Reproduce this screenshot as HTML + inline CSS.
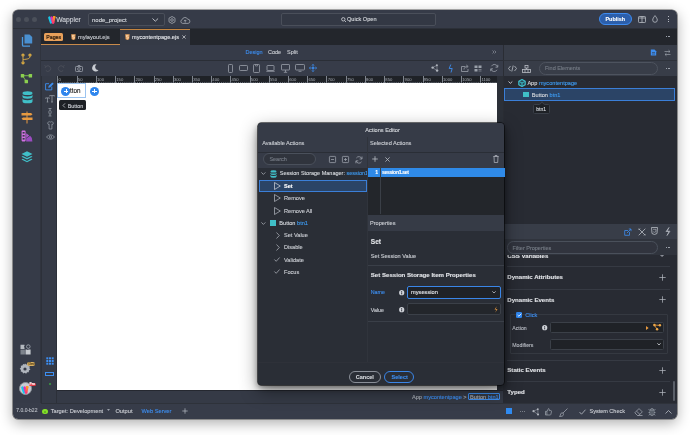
<!DOCTYPE html>
<html><head><meta charset="utf-8">
<style>
*{margin:0;padding:0;box-sizing:border-box}
html,body{width:690px;height:435px;overflow:hidden;background:#fff}
body{font-family:"Liberation Sans",sans-serif;position:relative;color:#c9ccd2}
.a{position:absolute}
.t{position:absolute;white-space:nowrap;line-height:8px;font-size:5.5px;-webkit-text-stroke:.12px currentColor}
.b{font-weight:bold}
svg{position:absolute;overflow:visible}
#win{position:absolute;left:13px;top:9.5px;width:664.3px;height:409px;border-radius:5px;overflow:hidden;box-shadow:0 4px 14px rgba(0,0,0,.33),0 0 0 .6px rgba(0,0,0,.6)}
#pg{position:absolute;left:-13px;top:-9.5px;width:690px;height:435px;will-change:transform}
.ic{stroke:#9aa0aa;fill:none;stroke-width:.8}
</style></head><body>
<div id="win"><div id="pg">
<!-- ===== base panels ===== -->
<div class="a" style="left:13px;top:9px;width:665px;height:410px;background:#363b48"></div>
<!-- title bar -->
<div class="a" style="left:13px;top:9px;width:665px;height:20px;background:#363b48;border-bottom:1px solid #2c3038"></div>
<!-- left sidebar -->
<div class="a" style="left:13px;top:29px;width:28px;height:374px;background:#363b48;border-right:1px solid #30343e"></div>
<!-- tabs bar -->
<div class="a" style="left:41px;top:29px;width:636px;height:16px;background:#23262c"></div>
<!-- design bar -->
<div class="a" style="left:41px;top:45px;width:462px;height:16px;background:#363b48;border-bottom:1px solid #2a2e36"></div>
<!-- toolbar -->
<div class="a" style="left:41px;top:61px;width:462px;height:15px;background:#373c49"></div>
<!-- left icon col -->
<div class="a" style="left:41px;top:76px;width:16px;height:327px;background:#353a46;border-left:1px solid #2c3039;border-right:1px solid #2c3039"></div>
<!-- canvas area bg -->
<div class="a" style="left:57px;top:76px;width:446px;height:327px;background:#2c3038"></div>
<!-- ruler -->
<div class="a" style="left:57px;top:76px;width:440px;height:7px;background:#1f2227"></div>
<!-- canvas -->
<div class="a" style="left:57px;top:83px;width:440px;height:307px;background:#fff"></div>
<!-- breadcrumb bar -->
<div class="a" style="left:57px;top:390px;width:446px;height:13px;background:#353a46;border-top:1.5px solid #252830"></div>
<!-- status bar -->
<div class="a" style="left:13px;top:402.5px;width:665px;height:17px;background:#373c49"></div><div class="a" style="left:41px;top:402.5px;width:637px;height:.8px;background:#2e323a"></div>
<!-- right panel -->
<div class="a" style="left:503px;top:45px;width:174px;height:16px;background:#383d48;border-left:1px solid #2a2d34;border-bottom:1px solid #2e323a"></div>
<div class="a" style="left:503px;top:61px;width:174px;height:15px;background:#383d48;border-left:1px solid #2a2d34"></div>
<div class="a" style="left:503px;top:76px;width:174px;height:148px;background:#282b33;border-left:1px solid #2a2d34"></div>
<div class="a" style="left:503px;top:224px;width:174px;height:15px;background:#383d48"></div>
<div class="a" style="left:503px;top:239px;width:174px;height:164px;background:#282b33"></div>
<!-- ===== title bar content ===== -->
<div class="a" style="left:16.4px;top:16.6px;width:5px;height:5px;border-radius:50%;background:#4b505a"></div>
<div class="a" style="left:24.1px;top:16.6px;width:5px;height:5px;border-radius:50%;background:#4b505a"></div>
<div class="a" style="left:31.7px;top:16.6px;width:5px;height:5px;border-radius:50%;background:#4b505a"></div>
<!-- wappler logo -->
<svg style="left:47.5px;top:15.5px" width="9" height="8" viewBox="0 0 9 8"><defs><linearGradient id="lg2" x1="0" y1="0" x2="0" y2="1"><stop offset="0" stop-color="#ff9a20"/><stop offset="1" stop-color="#ff3a6a"/></linearGradient></defs>
 <path d="M1.4 1.6 L3 6.4" stroke="#18c8e8" stroke-width="2.5" stroke-linecap="round"/>
 <path d="M3.6 1.6 L5 6.4" stroke="#e02cb8" stroke-width="2.5" stroke-linecap="round"/>
 <path d="M6.4 1.3 L6.2 1.3 L5.2 6.4" stroke="url(#lg2)" stroke-width="2.5" stroke-linecap="round"/>
</svg>
<div class="t" style="left:56.2px;top:15.3px;font-size:6.7px;line-height:9px;color:#cfd2d8">Wappler</div>
<!-- project dropdown -->
<div class="a" style="left:88px;top:13px;width:76.5px;height:12.5px;border:.8px solid #4a4f5a;border-radius:2px;background:#333844"></div>
<div class="t" style="left:92px;top:15.5px;font-size:6px;color:#d5d8dd">node_project</div>
<svg style="left:152px;top:17.5px" width="7" height="4"><path fill="none" d="M.5 .5 L3.3 3.2 L6.1 .5" stroke="#c9ccd2" stroke-width=".9"/></svg>
<!-- gear -->
<svg style="left:167.5px;top:16px" width="8" height="8" viewBox="0 0 8 8"><path d="M4 .5 L7 2.2 V5.8 L4 7.5 L1 5.8 V2.2 Z" stroke="#a4a9b1" stroke-width=".8" fill="none" stroke-linejoin="round"/><circle cx="4" cy="4" r="1.3" stroke="#a4a9b1" stroke-width=".8" fill="none"/></svg>
<!-- cloud -->
<svg style="left:180.3px;top:16.5px" width="10.5" height="7" viewBox="0 0 10.5 7"><path d="M2.6 6.4 A2 2 0 0 1 2.3 2.5 A2.8 2.8 0 0 1 7.6 2.2 A2.1 2.1 0 0 1 8 6.4 Z" stroke="#a4a9b1" stroke-width=".8" fill="none"/><path d="M5.2 5.6 V3 M4 4.1 L5.2 2.9 L6.4 4.1" stroke="#a4a9b1" stroke-width=".8" fill="none"/></svg>
<!-- quick open -->
<div class="a" style="left:281px;top:13px;width:155px;height:12.5px;border:.8px solid #4a4f5a;border-radius:2px;background:#333844"></div>
<svg style="left:341px;top:16.5px" width="6" height="6"><circle fill="none" stroke-width=".8" cx="2.3" cy="2.3" r="1.7" stroke="#d5d8dd"/><path fill="none" stroke-width=".8" d="M3.6 3.6 L5 5" stroke="#d5d8dd"/></svg>
<div class="t" style="left:347px;top:15px;font-size:5.6px;color:#d5d8dd">Quick Open</div>
<!-- publish -->
<div class="a" style="left:599px;top:13px;width:33px;height:12px;border-radius:6px;background:#2c5fab;border:1px solid #3d8bf0"></div>
<div class="t b" style="left:605.5px;top:15px;font-size:5.4px;color:#fff">Publish</div>
<!-- split icon -->
<svg style="left:638px;top:15.5px" width="8" height="7"><rect fill="none" stroke-width=".8" x=".5" y=".5" width="7" height="6" rx=".8" stroke="#b8bcc4"/><path fill="none" stroke-width=".8" d="M4 .5 V6.5 M.5 2 H7.5" stroke="#b8bcc4"/></svg>
<!-- droplet -->
<svg style="left:652px;top:15px" width="6" height="8"><path fill="none" stroke-width=".8" d="M3 .6 C4.3 2.4 5.3 3.6 5.3 5 A2.3 2.3 0 0 1 .7 5 C.7 3.6 1.7 2.4 3 .6 Z" stroke="#b8bcc4"/></svg>
<!-- dots -->
<div class="a" style="left:667.8px;top:16px;width:1.2px;height:1.2px;background:#b8bcc4"></div>
<div class="a" style="left:667.8px;top:18.6px;width:1.2px;height:1.2px;background:#b8bcc4"></div>
<div class="a" style="left:667.8px;top:21.2px;width:1.2px;height:1.2px;background:#b8bcc4"></div>

<!-- ===== tabs bar ===== -->
<div class="a" style="left:41px;top:44px;width:79px;height:1px;background:#c88a4a"></div>
<div class="a" style="left:44px;top:33px;width:19px;height:7.5px;border-radius:1.5px;background:#e8a05a"></div>
<div class="t" style="left:46.3px;top:32.7px;font-size:5.2px;color:#24160a;-webkit-text-stroke:.2px #24160a">Pages</div>
<svg style="left:70.5px;top:33.8px" width="5" height="6.5"><path d="M.2 .2 H4.6 L4.2 5.2 L2.4 6.1 L.6 5.2 Z" fill="#e8a05a"/><path d="M3.4 1.4 H1.5 L1.6 3 H3.3 L3.2 4.3 L2.4 4.7 L1.6 4.3" stroke="#fff3e0" stroke-width=".55" fill="none"/></svg>
<div class="t" style="left:78px;top:33px;font-size:5.7px;color:#c9ccd2">mylayout.ejs</div>
<div class="a" style="left:120px;top:29px;width:69.6px;height:16px;background:#353a46;border-top:.9px solid #c4843f"></div>
<svg style="left:124.5px;top:33.8px" width="5" height="6.5"><path d="M.2 .2 H4.6 L4.2 5.2 L2.4 6.1 L.6 5.2 Z" fill="#e8a05a"/><path d="M3.4 1.4 H1.5 L1.6 3 H3.3 L3.2 4.3 L2.4 4.7 L1.6 4.3" stroke="#fff3e0" stroke-width=".55" fill="none"/></svg>
<div class="t" style="left:132px;top:33px;font-size:5.6px;color:#e2e4e8">mycontentpage.ejs</div>
<svg style="left:182.3px;top:35px" width="4" height="4"><path d="M.4 .4 L3.6 3.6 M3.6 .4 L.4 3.6" stroke="#c9ccd2" stroke-width=".75"/></svg>
<div class="a" style="left:666.40px;top:36.35px;width:.9px;height:.9px;background:#9aa0aa"></div><div class="a" style="left:667.70px;top:36.35px;width:.9px;height:.9px;background:#9aa0aa"></div><div class="a" style="left:669.00px;top:36.35px;width:.9px;height:.9px;background:#9aa0aa"></div>
<!-- ===== design bar ===== -->
<div class="t" style="left:245.5px;top:48px;font-size:5.5px;color:#3d8ef0">Design</div>
<div class="t" style="left:268px;top:48px;font-size:5.5px;color:#c9ccd2">Code</div>
<div class="t" style="left:287px;top:48px;font-size:5.5px;color:#c9ccd2">Split</div>
<svg style="left:492px;top:50px" width="5" height="5"><path fill="none" stroke="#9aa0aa" d="M.5 .5 L2 2 L.5 3.5 M2.5 .5 L4 2 L2.5 3.5" stroke-width=".6"/></svg>
<!-- right panel top icons -->
<svg style="left:650px;top:49px" width="7" height="7"><path d="M.8 .5 H4.5 L6.2 2.2 V6.5 H.8 Z" fill="#3d8ef0"/><path d="M2 3.5 H5 M2 5 H5" stroke="#383d48" stroke-width=".6"/></svg>
<svg style="left:663.5px;top:49.5px" width="7" height="6"><path fill="none" stroke="#9aa0aa" d="M.5 1.5 H6 M4.5 .2 L6 1.5 L4.5 2.8 M6.5 4.5 H1 M2.5 3.2 L1 4.5 L2.5 5.8" stroke-width=".7"/></svg>
<!-- ===== toolbar ===== -->
<svg style="left:44px;top:65px" width="8" height="7"><path fill="none" stroke-width=".8" d="M2 1.5 A2.8 2.8 0 1 1 1.8 5.5 M.5 .5 L2 1.5 L1 3" stroke="#4c515b"/></svg>
<svg style="left:57px;top:65px" width="8" height="7"><path fill="none" stroke-width=".8" d="M6 1.5 A2.8 2.8 0 1 0 6.2 5.5 M7.5 .5 L6 1.5 L7 3" stroke="#4c515b"/></svg>
<svg style="left:74.5px;top:64.5px" width="8" height="7"><rect fill="none" stroke-width=".8" stroke="#9aa0aa" x=".5" y="1.5" width="7" height="5" rx=".8"/><circle fill="none" stroke-width=".8" stroke="#9aa0aa" cx="4" cy="4" r="1.4"/><path fill="none" stroke-width=".8" stroke="#9aa0aa" d="M2.5 1.5 L3 .5 H5 L5.5 1.5"/></svg>
<svg style="left:91.5px;top:64px" width="7" height="8"><path d="M4.5 .5 A3.5 3.5 0 1 0 6.5 6 A3 3 0 0 1 4.5 .5 Z" fill="#c9ccd2"/></svg>
<!-- devices -->
<svg style="left:228px;top:63.5px" width="5" height="9"><rect fill="none" stroke-width=".8" stroke="#9aa0aa" x=".5" y=".5" width="4" height="8" rx=".8"/></svg>
<svg style="left:238.5px;top:65px" width="9" height="6"><rect fill="none" stroke-width=".8" stroke="#9aa0aa" x=".5" y=".5" width="8" height="5" rx=".8"/></svg>
<svg style="left:253px;top:63.5px" width="7" height="9"><rect fill="none" stroke-width=".8" stroke="#9aa0aa" x=".5" y=".5" width="6" height="8" rx=".8"/><path fill="none" stroke="#9aa0aa" d="M2.5 .5 V2 H4.5 V.5" stroke-width=".6"/></svg>
<svg style="left:265.5px;top:64.5px" width="9" height="7"><rect fill="none" stroke-width=".8" stroke="#9aa0aa" x="1" y=".5" width="7" height="5" rx=".6"/><path fill="none" stroke-width=".8" stroke="#9aa0aa" d="M.3 6.3 H8.7"/></svg>
<svg style="left:280.5px;top:63.5px" width="9" height="9"><rect fill="none" stroke-width=".8" stroke="#9aa0aa" x=".5" y=".5" width="8" height="5.5" rx=".6"/><path fill="none" stroke-width=".8" stroke="#9aa0aa" d="M4.5 6 V8 M2.8 8.3 H6.2"/></svg>
<svg style="left:294.5px;top:64px" width="10" height="8"><rect fill="none" stroke-width=".8" stroke="#9aa0aa" x=".5" y=".5" width="9" height="5.5" rx=".8"/><path fill="none" stroke-width=".8" stroke="#9aa0aa" d="M3.5 7.3 H6.5"/></svg>
<svg style="left:309px;top:64px" width="8" height="8"><path d="M4 .5 V7.5 M.5 4 H7.5" stroke="#3d8ef0" stroke-width=".7"/><path d="M3 1.5 L4 .4 L5 1.5 M3 6.5 L4 7.6 L5 6.5 M1.5 3 L.4 4 L1.5 5 M6.5 3 L7.6 4 L6.5 5" stroke="#3d8ef0" stroke-width=".8" fill="none"/><circle cx="4" cy="4" r="1" fill="#3d8ef0"/></svg>
<!-- right tools -->
<svg style="left:431px;top:64.3px" width="8" height="8"><path d="M1.6 3.6 L5.9 1.3 M1.6 3.6 L6.1 6.6 M5.9 1.3 L6.1 6.6" stroke="#9aa0aa" stroke-width=".6" fill="none"/><circle cx="1.6" cy="3.6" r="1.2" fill="#b0b5bd"/><circle cx="5.9" cy="1.3" r="1" fill="#b0b5bd"/><circle cx="6.1" cy="6.6" r="1.2" fill="#b0b5bd"/></svg>
<svg style="left:447.5px;top:63.5px" width="6" height="9"><path d="M2.8 .5 L1.2 4.5 H4.2 L3 8.5" stroke="#3d8ef0" stroke-width=".9" fill="none" stroke-linejoin="round"/></svg>
<svg style="left:460.5px;top:64px" width="9" height="8"><path fill="none" stroke-width=".8" stroke="#9aa0aa" d="M4 2.5 H.5 V7.5 H7 V5"/><path fill="none" stroke-width=".8" stroke="#9aa0aa" d="M3 5.5 C3 3.5 4.5 2.5 6.5 2.5 M5.3 1 L7.2 2.5 L5.3 4"/></svg>
<svg style="left:474px;top:64.5px" width="8" height="7"><rect x=".5" y=".5" width="3" height="2.5" fill="#9aa0aa"/><rect x="4.5" y=".5" width="3" height="2.5" fill="#9aa0aa"/><rect x=".5" y="4" width="3" height="2.5" fill="#9aa0aa"/><path fill="none" stroke="#9aa0aa" d="M4.5 4.5 H7.5 M4.5 6 H7.5" stroke-width=".6"/></svg>
<svg style="left:490px;top:64px" width="9" height="8"><path fill="none" stroke-width=".8" stroke="#9aa0aa" d="M7.5 3 A3.2 3.2 0 0 0 1.5 2.2 M1 5 A3.2 3.2 0 0 0 7 5.8"/><path fill="none" stroke-width=".8" stroke="#9aa0aa" d="M7.8 .8 V3.2 H5.5 M.7 7.2 V4.8 H3"/></svg>
<!-- right panel toolbar -->
<svg style="left:508px;top:65px" width="9" height="7"><path fill="none" stroke-width=".8" d="M2.5 1 L.5 3.5 L2.5 6 M6.5 1 L8.5 3.5 L6.5 6 M5.2 .5 L3.8 6.5" stroke="#b8bcc4"/></svg>
<svg style="left:522px;top:64.5px" width="9" height="8"><rect fill="none" stroke-width=".8" x="3" y=".5" width="3" height="2.5" stroke="#b8bcc4"/><rect fill="none" stroke-width=".8" x=".5" y="4.5" width="8" height="3" stroke="#b8bcc4"/><path fill="none" stroke-width=".8" d="M3 4.5 V7.5 M6 4.5 V7.5 M4.5 3 V4.5" stroke="#b8bcc4"/></svg>
<div class="a" style="left:538.5px;top:62px;width:119.5px;height:12.5px;border:.8px solid #4d535e;border-radius:6.5px"></div>
<div class="t" style="left:545px;top:64.3px;font-size:5.5px;color:#767c86">Find Elements</div>
<div class="a" style="left:666.40px;top:67.75px;width:.9px;height:.9px;background:#9aa0aa"></div><div class="a" style="left:667.70px;top:67.75px;width:.9px;height:.9px;background:#9aa0aa"></div><div class="a" style="left:669.00px;top:67.75px;width:.9px;height:.9px;background:#9aa0aa"></div>
<!-- ruler -->
<div class="a" style="left:57.40px;top:76.2px;width:.7px;height:6.5px;background:#80868f"></div>
<div class="t" style="left:58.60px;top:76.6px;font-size:4.2px;line-height:5.5px;color:#a8adb5;-webkit-text-stroke:0">0</div>
<div class="a" style="left:76.62px;top:76.2px;width:.7px;height:6.5px;background:#80868f"></div>
<div class="t" style="left:77.82px;top:76.6px;font-size:4.2px;line-height:5.5px;color:#a8adb5;-webkit-text-stroke:0">50</div>
<div class="a" style="left:95.84px;top:76.2px;width:.7px;height:6.5px;background:#80868f"></div>
<div class="t" style="left:97.04px;top:76.6px;font-size:4.2px;line-height:5.5px;color:#a8adb5;-webkit-text-stroke:0">100</div>
<div class="a" style="left:115.06px;top:76.2px;width:.7px;height:6.5px;background:#80868f"></div>
<div class="t" style="left:116.26px;top:76.6px;font-size:4.2px;line-height:5.5px;color:#a8adb5;-webkit-text-stroke:0">150</div>
<div class="a" style="left:134.28px;top:76.2px;width:.7px;height:6.5px;background:#80868f"></div>
<div class="t" style="left:135.48px;top:76.6px;font-size:4.2px;line-height:5.5px;color:#a8adb5;-webkit-text-stroke:0">200</div>
<div class="a" style="left:153.50px;top:76.2px;width:.7px;height:6.5px;background:#80868f"></div>
<div class="t" style="left:154.70px;top:76.6px;font-size:4.2px;line-height:5.5px;color:#a8adb5;-webkit-text-stroke:0">250</div>
<div class="a" style="left:172.72px;top:76.2px;width:.7px;height:6.5px;background:#80868f"></div>
<div class="t" style="left:173.92px;top:76.6px;font-size:4.2px;line-height:5.5px;color:#a8adb5;-webkit-text-stroke:0">300</div>
<div class="a" style="left:191.94px;top:76.2px;width:.7px;height:6.5px;background:#80868f"></div>
<div class="t" style="left:193.14px;top:76.6px;font-size:4.2px;line-height:5.5px;color:#a8adb5;-webkit-text-stroke:0">350</div>
<div class="a" style="left:211.16px;top:76.2px;width:.7px;height:6.5px;background:#80868f"></div>
<div class="t" style="left:212.36px;top:76.6px;font-size:4.2px;line-height:5.5px;color:#a8adb5;-webkit-text-stroke:0">400</div>
<div class="a" style="left:230.38px;top:76.2px;width:.7px;height:6.5px;background:#80868f"></div>
<div class="t" style="left:231.58px;top:76.6px;font-size:4.2px;line-height:5.5px;color:#a8adb5;-webkit-text-stroke:0">450</div>
<div class="a" style="left:249.60px;top:76.2px;width:.7px;height:6.5px;background:#80868f"></div>
<div class="t" style="left:250.80px;top:76.6px;font-size:4.2px;line-height:5.5px;color:#a8adb5;-webkit-text-stroke:0">500</div>
<div class="a" style="left:268.82px;top:76.2px;width:.7px;height:6.5px;background:#80868f"></div>
<div class="t" style="left:270.02px;top:76.6px;font-size:4.2px;line-height:5.5px;color:#a8adb5;-webkit-text-stroke:0">550</div>
<div class="a" style="left:288.04px;top:76.2px;width:.7px;height:6.5px;background:#80868f"></div>
<div class="t" style="left:289.24px;top:76.6px;font-size:4.2px;line-height:5.5px;color:#a8adb5;-webkit-text-stroke:0">600</div>
<div class="a" style="left:307.26px;top:76.2px;width:.7px;height:6.5px;background:#80868f"></div>
<div class="t" style="left:308.46px;top:76.6px;font-size:4.2px;line-height:5.5px;color:#a8adb5;-webkit-text-stroke:0">650</div>
<div class="a" style="left:326.48px;top:76.2px;width:.7px;height:6.5px;background:#80868f"></div>
<div class="t" style="left:327.68px;top:76.6px;font-size:4.2px;line-height:5.5px;color:#a8adb5;-webkit-text-stroke:0">700</div>
<div class="a" style="left:345.70px;top:76.2px;width:.7px;height:6.5px;background:#80868f"></div>
<div class="t" style="left:346.90px;top:76.6px;font-size:4.2px;line-height:5.5px;color:#a8adb5;-webkit-text-stroke:0">750</div>
<div class="a" style="left:364.92px;top:76.2px;width:.7px;height:6.5px;background:#80868f"></div>
<div class="t" style="left:366.12px;top:76.6px;font-size:4.2px;line-height:5.5px;color:#a8adb5;-webkit-text-stroke:0">800</div>
<div class="a" style="left:384.14px;top:76.2px;width:.7px;height:6.5px;background:#80868f"></div>
<div class="t" style="left:385.34px;top:76.6px;font-size:4.2px;line-height:5.5px;color:#a8adb5;-webkit-text-stroke:0">850</div>
<div class="a" style="left:403.36px;top:76.2px;width:.7px;height:6.5px;background:#80868f"></div>
<div class="t" style="left:404.56px;top:76.6px;font-size:4.2px;line-height:5.5px;color:#a8adb5;-webkit-text-stroke:0">900</div>
<div class="a" style="left:422.58px;top:76.2px;width:.7px;height:6.5px;background:#80868f"></div>
<div class="t" style="left:423.78px;top:76.6px;font-size:4.2px;line-height:5.5px;color:#a8adb5;-webkit-text-stroke:0">950</div>
<div class="a" style="left:441.80px;top:76.2px;width:.7px;height:6.5px;background:#80868f"></div>
<div class="t" style="left:443.00px;top:76.6px;font-size:4.2px;line-height:5.5px;color:#a8adb5;-webkit-text-stroke:0">1000</div>
<div class="a" style="left:461.02px;top:76.2px;width:.7px;height:6.5px;background:#80868f"></div>
<div class="t" style="left:462.22px;top:76.6px;font-size:4.2px;line-height:5.5px;color:#a8adb5;-webkit-text-stroke:0">1050</div>
<div class="a" style="left:480.24px;top:76.2px;width:.7px;height:6.5px;background:#80868f"></div>
<div class="t" style="left:481.44px;top:76.6px;font-size:4.2px;line-height:5.5px;color:#a8adb5;-webkit-text-stroke:0">1100</div>
<div class="a" style="left:57px;top:82px;width:440px;height:.8px;background-image:linear-gradient(90deg,#6a707a 50%,transparent 50%);background-size:1.92px 1px"></div>
<!-- ===== canvas content ===== -->
<div class="a" style="left:57px;top:83.4px;width:28.6px;height:14.8px;border:.7px solid #9cc4f0;background:#fff"></div>
<div class="t" style="left:62.2px;top:87.1px;font-size:6.3px;color:#111;-webkit-text-stroke:.1px #111">Button</div>
<div class="a" style="left:61.2px;top:86.5px;width:9.2px;height:9.2px;border-radius:50%;background:#2f86ee"></div>
<div class="a" style="left:63.5px;top:90.5px;width:4.5px;height:1px;background:#fff"></div>
<div class="a" style="left:65.5px;top:88.5px;width:1px;height:4.5px;background:#fff"></div>
<div class="a" style="left:89.7px;top:86.5px;width:9.2px;height:9.2px;border-radius:50%;background:#2f86ee"></div>
<div class="a" style="left:92px;top:90.5px;width:4.5px;height:1px;background:#fff"></div>
<div class="a" style="left:94px;top:88.5px;width:1px;height:4.5px;background:#fff"></div>
<div class="a" style="left:58.9px;top:100px;width:27.1px;height:10.3px;border-radius:1.5px;background:#1d2025"></div>
<svg style="left:61.8px;top:102.8px" width="4" height="5"><path d="M3 .4 L1 2.5 L3 4.6" stroke="#c9ccd2" stroke-width=".75" fill="none"/></svg>
<div class="t" style="left:67.7px;top:101.5px;font-size:5.4px;color:#c9ccd2">Button</div>

<!-- ===== left sidebar icons ===== -->
<!-- pages -->
<svg style="left:20.5px;top:33.5px" width="12" height="13" viewBox="0 0 12 13"><path d="M3.5 .5 H8.5 L11.2 3 V9.5 H3.5 Z" fill="#4a90d0"/><path d="M1.5 3 V11 A1.2 1.2 0 0 0 2.7 12.2 H9" stroke="#4a9ae0" stroke-width="1.3" fill="none"/></svg>
<!-- git -->
<svg style="left:20px;top:52px" width="13" height="13" viewBox="0 0 13 13"><path d="M3 4.2 V9.3 M10 4.2 C10 7 7.5 7 3.2 7.6" stroke="#e0b04a" stroke-width=".9" fill="none"/><circle cx="3" cy="3" r="1.6" fill="#e8b84a"/><circle cx="10" cy="3" r="1.6" fill="#e8b84a"/><circle cx="3" cy="10.8" r="1.6" fill="#e8b84a"/><circle cx="3" cy="3" r=".6" fill="#7a5a20"/><circle cx="10" cy="3" r=".6" fill="#7a5a20"/><circle cx="3" cy="10.8" r=".6" fill="#7a5a20"/></svg>
<!-- tree -->
<svg style="left:20px;top:72.5px" width="13" height="11" viewBox="0 0 13 11"><path d="M2.5 2.7 H10.4 M2.5 2.7 L6.3 8.5" stroke="#7cc44a" stroke-width=".9" fill="none"/><rect x=".8" y="1" width="3.4" height="3.4" rx=".5" fill="#8cd050"/><rect x="8.7" y="1" width="3.4" height="3.4" rx=".5" fill="#8cd050"/><rect x="4.6" y="6.8" width="3.4" height="3.4" rx=".5" fill="#8cd050"/></svg>
<!-- database -->
<svg style="left:21.5px;top:91px" width="11" height="13" viewBox="0 0 11 13"><ellipse cx="5.5" cy="2.2" rx="5" ry="1.9" fill="#40bfc8"/><path d="M.5 3.6 V5.8 A5 1.9 0 0 0 10.5 5.8 V3.6 A5 1.9 0 0 1 .5 3.6 Z" fill="#40bfc8"/><path d="M.5 7.3 V10.4 A5 1.9 0 0 0 10.5 10.4 V7.3 A5 1.9 0 0 1 .5 7.3 Z" fill="#40bfc8"/></svg>
<!-- signpost -->
<svg style="left:21px;top:110.5px" width="12" height="13" viewBox="0 0 12 13"><path d="M6 .5 V12.5" stroke="#e89a40" stroke-width="1"/><path d="M.5 2 H10 L11.5 3.3 L10 4.6 H.5 Z" fill="#e89a40"/><path d="M11.5 6.5 H2 L.5 7.8 L2 9.1 H11.5 Z" fill="#e89a40"/></svg>
<!-- palette -->
<svg style="left:21px;top:130px" width="12" height="12" viewBox="0 0 12 12"><rect x=".6" y=".6" width="4" height="10.8" rx=".8" fill="#d070e0"/><rect x="1.6" y="2" width="2" height="1.6" fill="#363b48"/><rect x="1.6" y="5" width="2" height="1.6" fill="#363b48"/><rect x="1.6" y="8" width="2" height="1.6" fill="#363b48"/><path d="M5.2 3.2 L8.2 5.4 L5.2 8 Z" fill="#b058d0"/><path d="M5.2 11.4 V8.4 L9.2 5.8 A6.5 6.5 0 0 1 11.4 11.4 Z" fill="#9a4cc0"/></svg>
<!-- layers -->
<svg style="left:21px;top:151px" width="12" height="12" viewBox="0 0 12 12"><path d="M6 .3 L11.5 3 L6 5.7 L.5 3 Z" fill="#40bfc8"/><path d="M1.8 5 L.5 5.8 L6 8.5 L11.5 5.8 L10.2 5 L6 7.1 Z" fill="#40bfc8"/><path d="M1.8 7.8 L.5 8.6 L6 11.3 L11.5 8.6 L10.2 7.8 L6 9.9 Z" fill="#40bfc8"/></svg>
<!-- puzzle -->
<svg style="left:19.5px;top:344px" width="11.5" height="11" viewBox="0 0 11.5 11"><path d="M.5 .8 H4.5 V2 A.9 .9 0 0 0 4.5 3.6 V5 H.5 Z" fill="#b4b9c0"/><rect x=".5" y="5.6" width="4.4" height="4.9" fill="#7d838c"/><path d="M5.5 5.6 H7 A.9 .9 0 0 0 8.6 5.6 H10.6 V10.5 H5.5 Z" fill="#c4c8ce"/><circle cx="8.3" cy="2.6" r="1.8" stroke="#9aa0aa" stroke-width=".9" fill="none"/></svg>
<!-- gear dev -->
<svg style="left:19px;top:363px" width="12" height="12" viewBox="0 0 12 12"><path d="M6 .4 L7.2 1.6 L8.9 1.3 L9.3 2.9 L10.9 3.6 L10.4 5.2 L11.4 6.6 L9.9 7.5 L9.8 9.2 L8.1 9.2 L7.1 10.7 L5.7 9.8 L4.1 10.6 L3.4 9 L1.7 8.6 L2 6.9 L.7 5.7 L2 4.5 L1.8 2.8 L3.4 2.5 L4.2 .9 L5.5 1.6 Z" fill="#b0b5bd"/><circle cx="6" cy="6" r="1.6" fill="#363b48"/></svg>
<div class="a" style="left:27.1px;top:362.3px;width:8.4px;height:4px;border-radius:2px;background:#d9b062"></div>
<div class="t" style="left:28.5px;top:360.8px;font-size:3.6px;line-height:6px;color:#4a3510">Dev</div>
<!-- wappler pro -->
<div class="a" style="left:18.6px;top:382px;width:13.4px;height:13.4px;border-radius:50%;background:#c9ccd2;border:1px solid #8e939b"></div>
<svg style="left:21px;top:385.5px" width="9" height="8" viewBox="0 0 9 8"><defs><linearGradient id="lg4" x1="0" y1="0" x2="0" y2="1"><stop offset="0" stop-color="#ff9a20"/><stop offset="1" stop-color="#ff3a6a"/></linearGradient></defs>
 <path d="M1.4 1.6 L3 6.4" stroke="#18c8e8" stroke-width="2.5" stroke-linecap="round"/>
 <path d="M3.6 1.6 L5 6.4" stroke="#e02cb8" stroke-width="2.5" stroke-linecap="round"/>
 <path d="M6.4 1.3 L6.2 1.3 L5.2 6.4" stroke="url(#lg4)" stroke-width="2.5" stroke-linecap="round"/>
</svg>
<div class="a" style="left:28.6px;top:382.7px;width:7px;height:3.8px;border-radius:1.9px;background:#e03c48"></div>
<div class="t b" style="left:29.6px;top:381.3px;font-size:3.2px;line-height:6px;color:#fff">Pro</div>

<!-- ===== left icon col ===== -->
<svg style="left:44.8px;top:81.5px" width="9" height="8.5" viewBox="0 0 9 8.5"><path d="M6.8 4.6 V7.9 H.6 V1.7 H4" stroke="#3d8ef0" stroke-width=".9" fill="none"/><path d="M3.2 5.8 L3.6 4 L7.3 .4 L8.7 1.8 L5 5.4 Z" fill="#3d8ef0"/></svg>
<svg style="left:44.5px;top:94.5px" width="10" height="7.5"><path d="M.6 2.9 H4.4 M.6 2.9 V3.6 M4.4 2.9 V3.6 M2.5 2.9 V7 M1.7 7 H3.3 M4.6 .6 H9.4 M4.6 .6 V1.4 M9.4 .6 V1.4 M7 .6 V7 M6 7 H8" stroke="#9aa0aa" stroke-width=".75" fill="none"/></svg>
<svg style="left:47.5px;top:107.5px" width="4" height="8.5"><path d="M.5 .5 H3.5 M2 .5 V2.5 M.5 8 H3.5 M2 6 V8" stroke="#9aa0aa" stroke-width=".7" fill="none"/><rect x=".9" y="2.6" width="2.2" height="3.3" rx=".8" stroke="#9aa0aa" stroke-width=".7" fill="none"/></svg>
<svg style="left:46.5px;top:120.5px" width="7" height="8.5"><path d="M2.3 .5 C2.7 1.3 4.3 1.3 4.7 .5 L6.5 1.8 L5.6 3.6 L4.9 3.2 V8 H2.1 V3.2 L1.4 3.6 L.5 1.8 Z" stroke="#9aa0aa" stroke-width=".7" fill="none" stroke-linejoin="round"/></svg>
<svg style="left:45.5px;top:133.8px" width="9" height="6"><path d="M.5 3 C2.5 .2 6.5 .2 8.5 3 C6.5 5.8 2.5 5.8 .5 3 Z" stroke="#9aa0aa" stroke-width=".7" fill="none"/><circle cx="4.5" cy="3" r="1.2" stroke="#9aa0aa" stroke-width=".7" fill="none"/></svg>
<!-- bottom icons -->
<svg style="left:45.5px;top:357px" width="8" height="8"><g fill="#3d8ef0"><rect x=".3" y=".3" width="2" height="2"/><rect x="3" y=".3" width="2" height="2"/><rect x="5.7" y=".3" width="2" height="2"/><rect x=".3" y="3" width="2" height="2"/><rect x="3" y="3" width="2" height="2"/><rect x="5.7" y="3" width="2" height="2"/><rect x=".3" y="5.7" width="2" height="2"/><rect x="3" y="5.7" width="2" height="2"/><rect x="5.7" y="5.7" width="2" height="2"/></g></svg>
<div class="a" style="left:45.3px;top:371.8px;width:8.6px;height:4.2px;border:.8px solid #3d8ef0"></div>
<div class="a" style="left:48.6px;top:383.2px;width:2.2px;height:2.2px;border-radius:50%;background:#3aa040"></div>


<!-- ===== breadcrumb ===== -->
<div class="t" style="left:412px;top:392.5px;font-size:5.6px;color:#a8adb5">App <span style="color:#3d8ef0">mycontentpage</span> &gt;</div>
<div class="a" style="left:468.3px;top:393px;width:31.5px;height:7.2px;border:.8px solid #3d8ef0;border-radius:1px"></div>
<div class="t" style="left:470px;top:392.5px;font-size:5.6px;color:#a8adb5">Button <span style="color:#3d8ef0">btn1</span></div>

<!-- ===== status bar ===== -->
<div class="t" style="left:16.3px;top:406.1px;font-size:5px;color:#b8bcc4">7.0.0-b22</div>
<div class="a" style="left:42px;top:408.9px;width:5.6px;height:5.6px;border-radius:50%;background:#84e028"></div>
<div class="a" style="left:43.7px;top:410.6px;width:2.2px;height:2.2px;border-radius:50%;background:#5aa820"></div>
<div class="t" style="left:50.7px;top:406.6px;font-size:5.7px;color:#c9ccd2">Target: Development</div>
<svg style="left:107px;top:409.1px" width="3" height="2"><path d="M0 0 H3 L1.5 2 Z" fill="#9aa0aa"/></svg>
<div class="t" style="left:115.4px;top:406.6px;font-size:5.7px;color:#c9ccd2">Output</div>
<div class="t" style="left:141.5px;top:406.6px;font-size:5.7px;color:#3d8ef0">Web Server</div>
<svg style="left:182px;top:408.1px" width="6" height="6"><path d="M3 .3 V5.7 M.3 3 H5.7" stroke="#b8bcc4" stroke-width=".7"/></svg>
<!-- right status -->
<div class="a" style="left:506.4px;top:408px;width:6.1px;height:6.2px;background:#2f8af0"></div>
<div class="a" style="left:520.3px;top:410.8px;width:1px;height:.8px;background:#7a8089"></div><div class="a" style="left:521.9px;top:410.8px;width:1px;height:.8px;background:#7a8089"></div><div class="a" style="left:523.5px;top:410.8px;width:1px;height:.8px;background:#7a8089"></div>
<svg style="left:532px;top:407.5px" width="8" height="8"><path d="M1.5 3.2 L5.8 1.2 M1.5 3.2 L6 6.5 M5.8 1.2 L6 6.5" stroke="#9aa0aa" stroke-width=".6" fill="none"/><circle cx="1.5" cy="3.2" r="1.1" fill="#b0b5bd"/><circle cx="5.8" cy="1.2" r=".9" fill="#b0b5bd"/><circle cx="6" cy="6.5" r="1.1" fill="#b0b5bd"/></svg>
<svg style="left:545px;top:407.6px" width="7" height="7.5"><path d="M.5 3.3 H1.9 V7 H.5 Z M1.9 3.5 L3.5 .6 C4.3 .6 4.5 1.4 4.2 2.6 H6 C6.5 2.6 6.7 3.1 6.5 3.6 L5.8 6.5 C5.7 6.8 5.4 7 5.1 7 H1.9" stroke="#9aa0aa" stroke-width=".75" fill="none" stroke-linejoin="round"/></svg>
<svg style="left:558.5px;top:407.6px" width="9" height="9"><path fill="none" stroke-width=".8" stroke="#9aa0aa" d="M8.5 .5 L4 5 M4 5 C2.5 4.5 1.2 5.5 1.5 7 L.5 8.5 C2.5 8.5 4.5 8 4.5 6.5 Z"/></svg>
<svg style="left:579px;top:408.6px" width="7" height="6"><path fill="none" stroke-width=".8" d="M.5 3 L2.5 5.2 L6.5 .7" stroke="#b8bcc4"/></svg>
<div class="t" style="left:589.5px;top:407.1px;font-size:5.5px;color:#c9ccd2">System Check</div>
<svg style="left:633.5px;top:408.1px" width="9" height="8"><path fill="none" stroke-width=".8" stroke="#9aa0aa" d="M3.5 7.5 L.8 4.8 L5 .6 L8.3 3.9 L4.7 7.5 Z M2.5 3.2 L6 6.5 M3.5 7.5 H8.5"/></svg>
<svg style="left:647.5px;top:407.1px" width="8" height="9"><path fill="none" stroke="#9aa0aa" d="M2 3 H6 V6.5 A2 2 0 0 1 2 6.5 Z M4 3 V8.5 M2.5 3 A1.5 1.5 0 0 1 5.5 3 M.5 2 L2 3.5 M7.5 2 L6 3.5 M.5 5.5 H2 M6 5.5 H7.5 M.7 8.3 L2.2 7 M7.3 8.3 L5.8 7" stroke-width=".7"/></svg>
<svg style="left:664.8px;top:409.6px" width="7" height="4"><path fill="none" stroke-width=".8" d="M.5 3.5 L3.5 .5 L6.5 3.5" stroke="#b8bcc4"/></svg>
<!-- ===== right panel tree ===== -->
<svg style="left:508.3px;top:81.3px" width="5" height="3"><path d="M.5 .5 L2.4 2.3 L4.3 .5" stroke="#d0d3d8" stroke-width=".9" fill="none"/></svg>
<svg style="left:517.5px;top:79px" width="8" height="8" viewBox="0 0 8 8"><path d="M4 .6 L7.2 2.3 V5.8 L4 7.5 L.8 5.8 V2.3 Z" fill="#2a4a55" stroke="#40c4d0" stroke-width="1.1" stroke-linejoin="round"/><path d="M1.2 2.5 L4 4 L6.8 2.5 M4 4 V7.2" stroke="#40c4d0" stroke-width=".9" fill="none"/></svg>
<div class="t" style="left:527.4px;top:79px;font-size:5.6px;color:#d5d8dd">App <span style="color:#3d9af0">mycontentpage</span></div>
<div class="a" style="left:504px;top:88px;width:170.5px;height:12.5px;background:#2b4466;border:.8px solid #3b7fd8"></div>
<div class="a" style="left:523px;top:91.8px;width:5.8px;height:5.6px;background:#40bfc8"></div>
<div class="t" style="left:531.8px;top:90.5px;font-size:5.6px;color:#d5d8dd">Button <span style="color:#3d9af0">btn1</span></div>
<!-- tooltip -->
<div class="a" style="left:533.4px;top:104.4px;width:16.6px;height:9.6px;background:#1e2126;border-radius:1.5px;border:.5px solid #3a3f48"></div>
<div class="a" style="left:539.7px;top:102.4px;width:4px;height:4px;background:#1e2126;transform:rotate(45deg);border-left:.5px solid #3a3f48;border-top:.5px solid #3a3f48"></div>
<div class="t" style="left:536.3px;top:105.3px;font-size:5px;color:#d5d8dd">btn1</div>

<!-- ===== properties panel ===== -->
<svg style="left:624px;top:227.5px" width="8" height="8"><path d="M5.5 4 V7.3 H.7 V2.5 H4" stroke="#3d8ef0" stroke-width=".8" fill="none"/><path d="M3 5 L6.8 1.2 M4.8 1 H7 V3.2" stroke="#3d8ef0" stroke-width=".8" fill="none"/></svg>
<svg style="left:637.5px;top:227.5px" width="8" height="8"><path fill="none" stroke-width=".8" d="M.7 .7 L7.3 7.3 M7.3 .7 L.7 7.3 M.5 2 L2 .5 M6 7.5 L7.5 6" stroke="#b8bcc4"/></svg>
<svg style="left:650.5px;top:227px" width="7" height="8"><path fill="none" stroke-width=".8" d="M.5 .5 H6.5 L6 6.5 L3.5 7.5 L1 6.5 Z" stroke="#b8bcc4"/><path fill="none" d="M2 2.3 H5 L4.8 4.8 L3.5 5.3 L2.2 4.8" stroke="#b8bcc4" stroke-width=".6"/></svg>
<svg style="left:664.5px;top:227px" width="6" height="9"><path fill="none" d="M4 .5 L1 4.5 H4 L2 8.5 L5 4.2 H2.2 Z" stroke="#b8bcc4" stroke-width=".7"/></svg>
<!-- scrolled content under filter -->
<div class="t b" style="left:507.3px;top:252.2px;font-size:6.1px;color:#e2e4e8">CSS Variables</div>
<div class="t" style="left:660px;top:251.5px;font-size:7px;color:#b8bcc4">+</div>
<div class="a" style="left:503px;top:239px;width:174px;height:16px;background:#30343d"></div>
<div class="a" style="left:506.5px;top:241px;width:151.3px;height:12.6px;border:.8px solid #4a505b;border-radius:6.3px;background:rgba(50,54,63,.6)"></div>
<div class="t" style="left:512.5px;top:243.5px;font-size:5.5px;color:#767c86">Filter Properties</div>
<div class="a" style="left:666.40px;top:246.85px;width:.9px;height:.9px;background:#9aa0aa"></div><div class="a" style="left:667.70px;top:246.85px;width:.9px;height:.9px;background:#9aa0aa"></div><div class="a" style="left:669.00px;top:246.85px;width:.9px;height:.9px;background:#9aa0aa"></div>
<div class="a" style="left:506.5px;top:266px;width:163px;height:.7px;background:#363a43"></div>
<div class="t b" style="left:507.3px;top:273.4px;font-size:6.1px;color:#e2e4e8">Dynamic Attributes</div>
<svg style="left:659px;top:274px" width="7" height="7"><path d="M3.5 .3 V6.7 M.3 3.5 H6.7" stroke="#b8bcc4" stroke-width=".7"/></svg>
<div class="a" style="left:506.5px;top:288.5px;width:163px;height:.7px;background:#363a43"></div>
<div class="t b" style="left:507.3px;top:295.5px;font-size:6.1px;color:#e2e4e8">Dynamic Events</div>
<svg style="left:659px;top:296px" width="7" height="7"><path d="M3.5 .3 V6.7 M.3 3.5 H6.7" stroke="#b8bcc4" stroke-width=".7"/></svg>
<!-- click group -->
<div class="a" style="left:510px;top:314px;width:158px;height:40px;border:.7px solid #353941;border-radius:1px"></div>
<div class="a" style="left:515.6px;top:311.7px;width:6.3px;height:6.2px;border-radius:1.2px;background:#2f86ee"></div>
<svg style="left:516.6px;top:312.8px" width="5" height="4"><path d="M.6 2 L1.9 3.2 L4.3 .7" stroke="#fff" stroke-width=".85" fill="none"/></svg>
<div class="t" style="left:525.3px;top:310.5px;font-size:5.6px;color:#3d8ef0">Click</div>
<div class="t" style="left:512.3px;top:323.5px;font-size:5.2px;color:#b8bcc4">Action</div>
<svg style="left:541.70px;top:324.80px" width="5.4" height="5.4"><circle cx="2.7" cy="2.7" r="2.6" fill="#d0d3d9"/><rect x="2.25" y="2.35" width=".9" height="2" fill="#282b33"/><circle cx="2.7" cy="1.45" r=".5" fill="#282b33"/></svg>
<div class="a" style="left:549.6px;top:321.7px;width:114px;height:11.8px;border:.7px solid #3b4048;border-radius:1.5px;background:#1f2227"></div>
<svg style="left:645.8px;top:325.5px" width="3" height="4"><path d="M0 0 L2.6 2 L0 4 Z" fill="#e89a40"/></svg>
<svg style="left:652px;top:323px" width="10" height="8"><path d="M2.4 2.1 L7.9 2.3 M2.4 2.1 L5.1 6.3" stroke="#f0a040" stroke-width=".8" fill="none"/><circle cx="2.4" cy="2.1" r="1.3" fill="#f0a848"/><circle cx="7.9" cy="2.3" r="1.2" fill="#f0a848"/><circle cx="5.1" cy="6.3" r="1.2" fill="#f0a848"/></svg>
<div class="t" style="left:512.3px;top:340.5px;font-size:5.2px;color:#b8bcc4">Modifiers</div>
<div class="a" style="left:549.6px;top:338.7px;width:114px;height:11.7px;border:.7px solid #3b4048;border-radius:1.5px;background:#1f2227"></div>
<svg style="left:657.3px;top:342.8px" width="4" height="3"><path d="M.4 .4 L2 1.9 L3.6 .4" stroke="#e0e3e8" stroke-width=".8" fill="none"/></svg>
<div class="a" style="left:506.5px;top:359.7px;width:163px;height:.7px;background:#363a43"></div>
<div class="t b" style="left:507.3px;top:366px;font-size:6.1px;color:#e2e4e8">Static Events</div>
<svg style="left:659px;top:367px" width="7" height="7"><path d="M3.5 .3 V6.7 M.3 3.5 H6.7" stroke="#b8bcc4" stroke-width=".7"/></svg>
<div class="a" style="left:506.5px;top:380.8px;width:163px;height:.7px;background:#363a43"></div>
<div class="t b" style="left:507.3px;top:387.7px;font-size:6.1px;color:#e2e4e8">Typed</div>
<svg style="left:659px;top:388.5px" width="7" height="7"><path d="M3.5 .3 V6.7 M.3 3.5 H6.7" stroke="#b8bcc4" stroke-width=".7"/></svg>
<div class="a" style="left:672.5px;top:381.3px;width:2px;height:19.6px;border-radius:1px;background:#5a5f68"></div>
<!-- ===== modal ===== -->
<div class="a" style="left:258px;top:123px;width:246.2px;height:262px;border-radius:3.5px;background:#2a2e36;box-shadow:0 6px 18px rgba(0,0,0,.45),2px 3px 5px rgba(0,0,0,.2),-2px 3px 5px rgba(0,0,0,.2),0 0 0 .8px rgba(8,10,13,.75);overflow:hidden">
 <div class="a" style="left:0;top:0;width:247px;height:44.5px;background:#363b47"></div>
 <div class="a" style="left:0;top:28.5px;width:109px;height:.8px;background:#2a2e36"></div>
 <div class="a" style="left:109.2px;top:28.5px;width:137.8px;height:.8px;background:#2a2e36"></div>
 <div class="a" style="left:109.2px;top:14px;width:.8px;height:225.5px;background:#30343c"></div>
 <div class="a" style="left:110px;top:44.5px;width:137px;height:47.5px;background:#23262b"></div>
 <div class="a" style="left:110px;top:92px;width:137px;height:15.5px;background:#363b46"></div>
 <div class="a" style="left:110px;top:141.5px;width:137px;height:.7px;background:#3a3f48"></div>
 <div class="a" style="left:110px;top:197.5px;width:137px;height:.7px;background:#3a3f48"></div>
 <div class="a" style="left:0;top:239px;width:247px;height:.5px;background:#2e3139"></div>
</div>
<div class="t" style="left:365.3px;top:126px;font-size:5.6px;color:#d5d8dd">Actions Editor</div>
<div class="t" style="left:262.2px;top:139.3px;font-size:5.6px;color:#c9ccd2">Available Actions</div>
<div class="t" style="left:370px;top:139.3px;font-size:5.6px;color:#c9ccd2">Selected Actions</div>
<!-- search -->
<div class="a" style="left:263.2px;top:153.2px;width:53.3px;height:12.3px;border:.8px solid #4a505b;border-radius:6.2px;background:#30343d"></div>
<div class="t" style="left:269.4px;top:155.4px;font-size:5.5px;color:#767c86">Search</div>
<svg style="left:328.5px;top:156px" width="7" height="7"><rect fill="none" stroke-width=".8" stroke="#9aa0aa" x=".4" y=".4" width="6.2" height="6.2" rx=".8"/><path fill="none" stroke-width=".8" stroke="#9aa0aa" d="M2 3.5 H5"/></svg>
<svg style="left:341.7px;top:156px" width="7" height="7"><rect fill="none" stroke-width=".8" stroke="#9aa0aa" x=".4" y=".4" width="6.2" height="6.2" rx=".8"/><path fill="none" stroke-width=".8" stroke="#9aa0aa" d="M2 3.5 H5 M3.5 2 V5"/></svg>
<svg style="left:354.5px;top:155.5px" width="8" height="8"><path fill="none" stroke-width=".8" stroke="#9aa0aa" d="M6.8 2.8 A3 3 0 0 0 1.4 2 M1.1 5 A3 3 0 0 0 6.5 5.8"/><path fill="none" stroke-width=".8" stroke="#9aa0aa" d="M7 .5 V3 H4.6 M.9 7.3 V4.8 H3.3"/></svg>
<!-- right header tools -->
<svg style="left:371.8px;top:156.3px" width="6" height="6"><path fill="none" stroke-width=".8" d="M3 .2 V5.8 M.2 3 H5.8" stroke="#b8bcc4"/></svg>
<svg style="left:385.3px;top:157px" width="5" height="5"><path fill="none" stroke-width=".8" d="M.4 .4 L4.6 4.6 M4.6 .4 L.4 4.6" stroke="#b8bcc4"/></svg>
<svg style="left:492.8px;top:155.3px" width="6" height="8"><path fill="none" d="M.3 1.5 H5.7 M2 1.5 V.5 H4 V1.5 M1 1.5 L1.3 7.5 H4.7 L5 1.5" stroke="#b8bcc4" stroke-width=".7"/></svg>
<!-- selected action row -->
<div class="a" style="left:367.8px;top:167.5px;width:137px;height:9.4px;background:#2f8ae8"></div>
<div class="a" style="left:380.3px;top:167.4px;width:.6px;height:47px;background:#3a3f47"></div>
<div class="t b" style="left:375.3px;top:168.3px;font-size:5.2px;color:#fff">1</div>
<div class="t b" style="left:382px;top:168.3px;font-size:5.1px;color:#fff;letter-spacing:-.33px">session1.set</div>
<!-- tree -->
<svg style="left:260.5px;top:172px" width="5" height="3"><path d="M.4 .4 L2.4 2.4 L4.4 .4" stroke="#b8bcc4" stroke-width=".7" fill="none"/></svg>
<svg style="left:269.7px;top:169.5px" width="7" height="8" viewBox="0 0 7 8"><ellipse cx="3.5" cy="1.4" rx="3.1" ry="1.2" fill="#40bfc8"/><path d="M.4 2.4 V3.7 A3.1 1.2 0 0 0 6.6 3.7 V2.4 A3.1 1.2 0 0 1 .4 2.4 Z" fill="#40bfc8"/><path d="M.4 4.7 V6.6 A3.1 1.2 0 0 0 6.6 6.6 V4.7 A3.1 1.2 0 0 1 .4 4.7 Z" fill="#40bfc8"/></svg>
<div class="a" style="left:279.8px;top:169px;width:87.4px;height:9px;overflow:hidden"><div class="t" style="left:0;top:0;font-size:5.5px;color:#d5d8dd">Session Storage Manager: <span style="color:#3d9af0">session1</span></div></div>
<div class="a" style="left:259.1px;top:180.2px;width:107.8px;height:11.6px;background:#2b4466;border:.8px solid #3b7fd8"></div>
<svg style="left:273.8px;top:182px" width="7" height="8"><path d="M.5 .5 L6.3 4 L.5 7.5 Z" stroke="#d5d8dd" stroke-width=".7" fill="none" stroke-linejoin="round"/></svg>
<div class="t b" style="left:284px;top:181.7px;font-size:5.6px;color:#fff">Set</div>
<svg style="left:273.8px;top:194.2px" width="7" height="8"><path fill="none" d="M.5 .5 L6.3 4 L.5 7.5 Z" stroke="#b8bcc4" stroke-width=".7" stroke-linejoin="round"/></svg>
<div class="t" style="left:284px;top:194.1px;font-size:5.6px;color:#c9ccd2">Remove</div>
<svg style="left:273.8px;top:206.6px" width="7" height="8"><path fill="none" d="M.5 .5 L6.3 4 L.5 7.5 Z" stroke="#b8bcc4" stroke-width=".7" stroke-linejoin="round"/></svg>
<div class="t" style="left:284px;top:206.5px;font-size:5.6px;color:#c9ccd2">Remove All</div>
<svg style="left:260.5px;top:221.5px" width="5" height="3"><path d="M.4 .4 L2.4 2.4 L4.4 .4" stroke="#b8bcc4" stroke-width=".7" fill="none"/></svg>
<div class="a" style="left:270.2px;top:220px;width:5.6px;height:5.6px;background:#40bfc8"></div>
<div class="t" style="left:279.3px;top:218.9px;font-size:5.6px;color:#d5d8dd">Button <span style="color:#3d9af0">btn1</span></div>
<svg style="left:275.5px;top:231.5px" width="4" height="7"><path fill="none" d="M.5 .5 L3.3 3.5 L.5 6.5" stroke="#b8bcc4" stroke-width=".7"/></svg>
<div class="t" style="left:284px;top:231.3px;font-size:5.6px;color:#c9ccd2">Set Value</div>
<svg style="left:275.5px;top:243.5px" width="4" height="7"><path fill="none" d="M.5 .5 L3.3 3.5 L.5 6.5" stroke="#b8bcc4" stroke-width=".7"/></svg>
<div class="t" style="left:284px;top:243.2px;font-size:5.6px;color:#c9ccd2">Disable</div>
<svg style="left:273.8px;top:257px" width="6" height="5"><path fill="none" d="M.4 2.5 L2.2 4.3 L5.6 .5" stroke="#b8bcc4" stroke-width=".7"/></svg>
<div class="t" style="left:284px;top:255.6px;font-size:5.6px;color:#c9ccd2">Validate</div>
<svg style="left:273.8px;top:269.4px" width="6" height="5"><path fill="none" d="M.4 2.5 L2.2 4.3 L5.6 .5" stroke="#b8bcc4" stroke-width=".7"/></svg>
<div class="t" style="left:284px;top:268px;font-size:5.6px;color:#c9ccd2">Focus</div>
<!-- properties -->
<div class="t" style="left:370px;top:219.2px;font-size:5.6px;color:#c9ccd2">Properties</div>
<div class="t b" style="left:370.8px;top:237.8px;font-size:6.6px;color:#e2e4e8">Set</div>
<div class="t" style="left:370.8px;top:252px;font-size:5.6px;color:#c9ccd2">Set Session Value</div>
<div class="t b" style="left:370.8px;top:270.7px;font-size:6.1px;color:#e2e4e8">Set Session Storage Item Properties</div>
<div class="t" style="left:370.8px;top:288.3px;font-size:5.3px;color:#3d8ef0">Name</div>
<svg style="left:399.40px;top:289.70px" width="5.4" height="5.4"><circle cx="2.7" cy="2.7" r="2.6" fill="#d0d3d9"/><rect x="2.25" y="2.35" width=".9" height="2" fill="#2a2e36"/><circle cx="2.7" cy="1.45" r=".5" fill="#2a2e36"/></svg>
<div class="a" style="left:407.2px;top:285.5px;width:94.3px;height:13.1px;border:1px solid #3a86e8;border-radius:2px;background:#1f2227"></div>
<div class="t" style="left:411px;top:288.4px;font-size:5.7px;color:#e2e4e8">mysession</div>
<svg style="left:491.5px;top:291.3px" width="4" height="3"><path d="M.3 .3 L2 2 L3.7 .3" stroke="#d5d8dd" stroke-width=".7" fill="none"/></svg>
<div class="t" style="left:370.8px;top:305.6px;font-size:5.3px;color:#c9ccd2">Value</div>
<svg style="left:399.40px;top:307.00px" width="5.4" height="5.4"><circle cx="2.7" cy="2.7" r="2.6" fill="#d0d3d9"/><rect x="2.25" y="2.35" width=".9" height="2" fill="#2a2e36"/><circle cx="2.7" cy="1.45" r=".5" fill="#2a2e36"/></svg>
<div class="a" style="left:407.2px;top:303.2px;width:94.3px;height:12.2px;border:.7px solid #3b4048;border-radius:2px;background:#23262b"></div>
<svg style="left:493.5px;top:306px" width="4" height="7"><path d="M2.8 .3 L.5 3.6 H2.4 L1.2 6.7 L3.5 3 H1.7 Z" fill="#e89a40"/></svg>
<!-- buttons -->
<div class="a" style="left:349.1px;top:371px;width:31.6px;height:11.8px;border:1px solid #8a8f98;border-radius:6px"></div>
<div class="t b" style="left:355.8px;top:373px;font-size:5.5px;color:#d5d8dd">Cancel</div>
<div class="a" style="left:384.3px;top:371px;width:30.2px;height:11.8px;border:1px solid #3a86e8;border-radius:6px"></div>
<div class="t b" style="left:391.6px;top:373px;font-size:5.5px;color:#3d8ef0">Select</div>
</div></div>
</body></html>
